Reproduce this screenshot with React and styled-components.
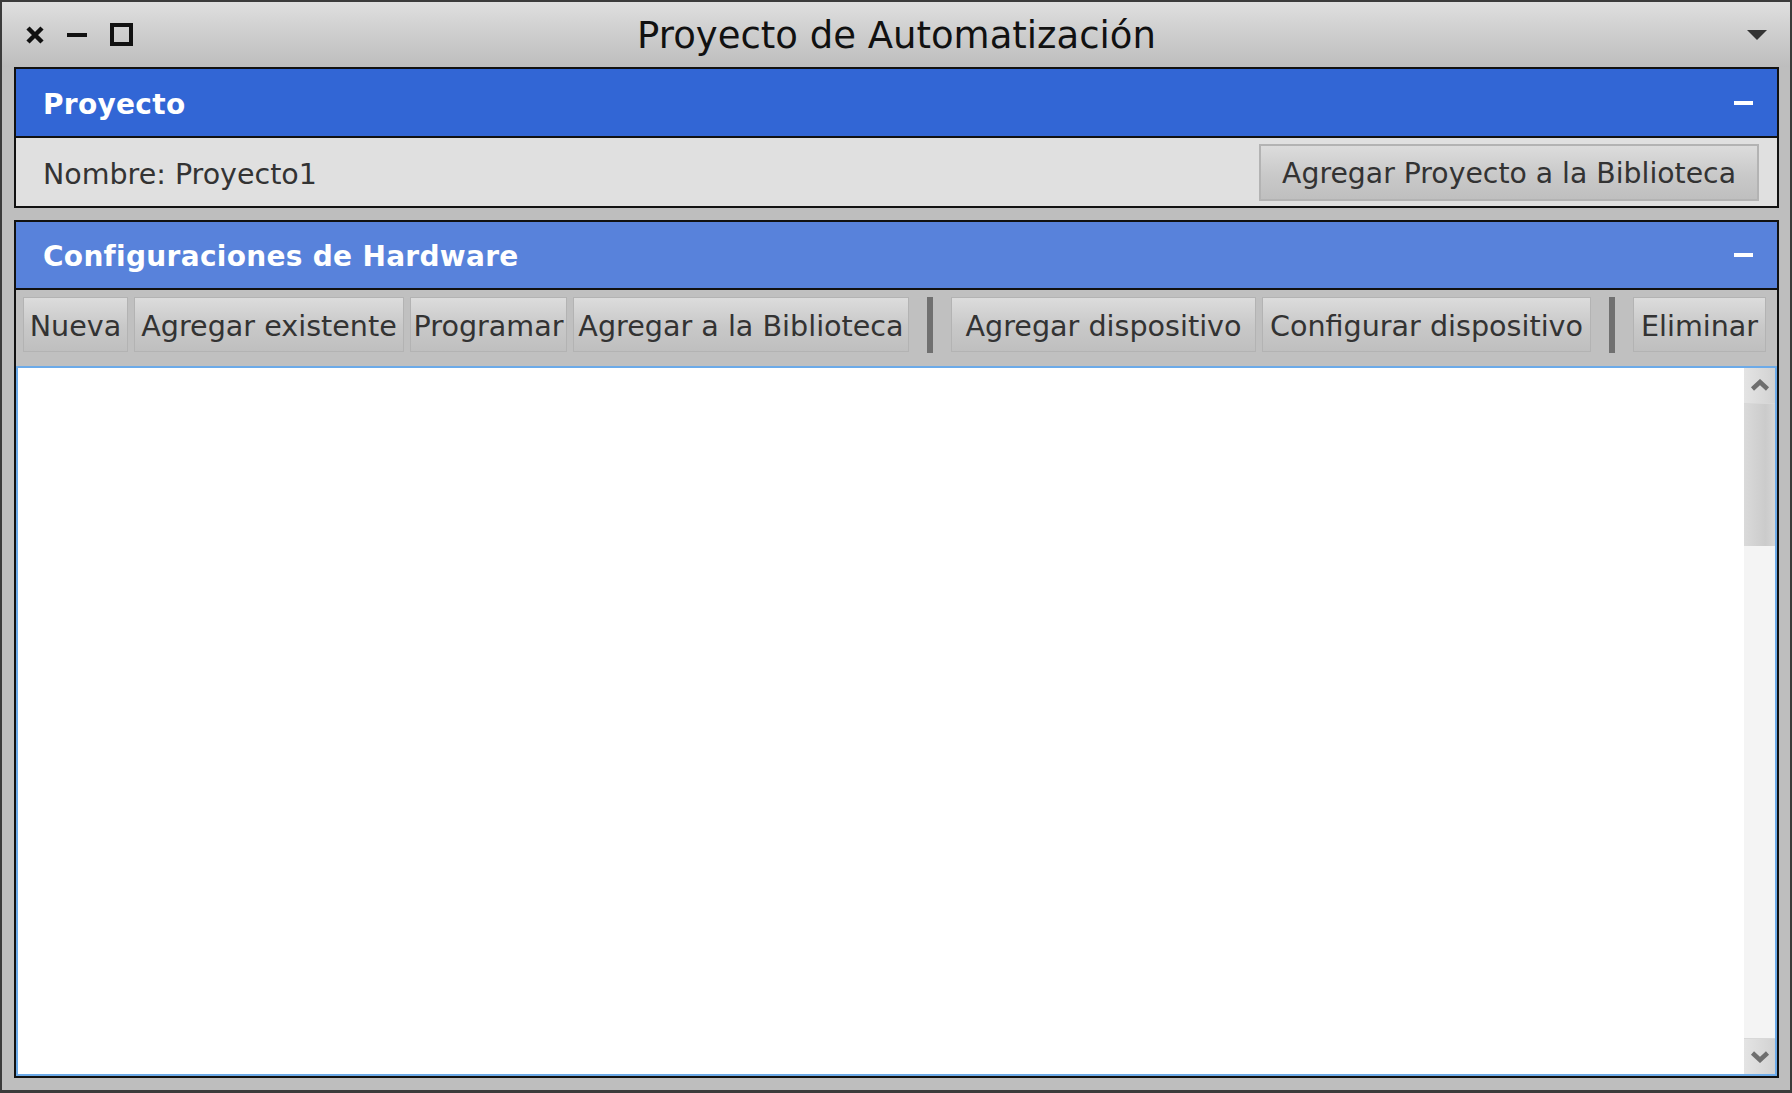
import React from "react"
import styled, { createGlobalStyle } from "styled-components"

const GlobalStyle = createGlobalStyle`
  html, body {
    margin: 0;
    padding: 0;
    background: #3b3b3b;
  }
  * {
    box-sizing: border-box;
  }
`

const Window = styled.div`
  width: 1792px;
  height: 1093px;
  border: 2px solid #3b3b3b;
  border-bottom-width: 3px;
  background: #bebebe;
  display: flex;
  flex-direction: column;
  font-family: "DejaVu Sans", "Liberation Sans", sans-serif;
  color: #333;
`

const TitleBar = styled.div`
  height: 65px;
  flex: none;
  display: grid;
  grid-template-columns: 1fr auto 1fr;
  align-items: center;
  padding: 0 23px 0 24px;
  background: linear-gradient(#dfdfdf, #cfcfcf 45%, #bdbdbd);
`

const Controls = styled.div`
  display: flex;
  align-items: center;
  gap: 23px;
`

const WindowTitle = styled.div`
  font-size: 37px;
  color: #111;
  padding-top: 2px;
  white-space: nowrap;
`

const MenuArrow = styled.div`
  justify-self: end;
  display: flex;
  align-items: center;
`

const Body = styled.div`
  flex: 1;
  display: flex;
  flex-direction: column;
  gap: 12px;
  padding: 0 11px 12px 12px;
  min-height: 0;
`

const Panel = styled.section`
  border: 2px solid #111;
  display: flex;
  flex-direction: column;
  flex: ${p => (p.$grow ? 1 : "none")};
  min-height: 0;
`

const PanelHeader = styled.div`
  height: ${p => p.$h}px;
  flex: none;
  display: flex;
  align-items: center;
  justify-content: space-between;
  padding: 3px 24px 0 27px;
  background: ${p => p.$bg};
  border-bottom: 2px solid #111;
  color: #fff;
  font-weight: bold;
  font-size: 28px;
  letter-spacing: 0.3px;
`

const Collapse = styled.span`
  width: 19px;
  height: 4px;
  background: #fff;
  margin-top: -3px;
`

const InfoRow = styled.div`
  height: 68px;
  display: flex;
  align-items: center;
  justify-content: space-between;
  padding: 0 18px 0 27px;
  background: #e0e0e0;
  font-size: 28.5px;
`

const Label = styled.span`
  padding-top: 4px;
`

const BigButton = styled.button`
  height: 57px;
  margin-top: 1px;
  padding: 2px 21px 0;
  border: 2px solid #b3b3b3;
  background: linear-gradient(#dcdcdc, #c9c9c9 55%, #bfbfbf);
  font-family: inherit;
  font-size: 28.3px;
  color: #333;
`

const Toolbar = styled.div`
  height: 76px;
  flex: none;
  display: flex;
  align-items: flex-start;
  gap: 6px;
  padding: 7px 7px 0 7px;
  background: #c0c0c0;
`

const ToolButton = styled.button`
  width: ${p => p.$w}px;
  height: 55px;
  padding: 2px 0 0;
  border: 1px solid #b3b3b3;
  background: linear-gradient(#dcdcdc, #c8c8c8 55%, #bfbfbf);
  font-family: inherit;
  font-size: 28.6px;
  color: #333;
  white-space: nowrap;
  text-align: center;
`

const Separator = styled.span`
  width: 6px;
  height: 56px;
  margin: 0 12px;
  background: #707070;
`

const ListBox = styled.div`
  flex: 1;
  min-height: 0;
  display: flex;
  border: 2px solid #6caae8;
  background: #fff;
`

const Canvas = styled.div`
  flex: 1;
`

const ScrollBar = styled.div`
  width: 31px;
  display: flex;
  flex-direction: column;
  background: #f4f4f4;
`

const ArrowButton = styled.div`
  height: 36px;
  flex: none;
  display: flex;
  align-items: center;
  justify-content: center;
  background: linear-gradient(to right, #e4e4e4, #d2d2d2);
  border-${p => (p.$down ? "top" : "bottom")}: 1px solid #d8d8d8;
`

const Thumb = styled.div`
  height: 142px;
  flex: none;
  background: linear-gradient(to right, #dadada, #cbcbcb 70%, #d6d6d6);
`

const Track = styled.div`
  flex: 1;
`

const Chevron = ({ down }) => (
  <svg width="20" height="13" viewBox="0 0 20 13">
    <polyline
      points={down ? "2.5,3 10,10 17.5,3" : "2.5,10 10,3 17.5,10"}
      fill="none"
      stroke="#6e6e6e"
      strokeWidth="4.5"
    />
  </svg>
)

const toolsA = [
  { label: "Nueva", w: 105 },
  { label: "Agregar existente", w: 270 },
  { label: "Programar", w: 157 },
  { label: "Agregar a la Biblioteca", w: 336 },
]
const toolsB = [
  { label: "Agregar dispositivo", w: 305 },
  { label: "Configurar dispositivo", w: 329 },
]

const App = () => {
  return (
    <>
      <GlobalStyle />
      <Window>
        <TitleBar>
          <Controls>
            <svg width="18" height="18" viewBox="0 0 18 18">
              <path d="M2 2 L16 16 M16 2 L2 16" stroke="#111" strokeWidth="4.5" />
            </svg>
            <svg width="20" height="4" viewBox="0 0 20 4">
              <rect width="20" height="4" fill="#111" />
            </svg>
            <svg width="23" height="23" viewBox="0 0 23 23">
              <rect x="2" y="2" width="19" height="19" fill="none" stroke="#111" strokeWidth="4" />
            </svg>
          </Controls>
          <WindowTitle>Proyecto de Automatización</WindowTitle>
          <MenuArrow>
            <svg width="20" height="10" viewBox="0 0 20 10">
              <polygon points="0,0 20,0 10,10" fill="#333" />
            </svg>
          </MenuArrow>
        </TitleBar>

        <Body>
          <Panel>
            <PanelHeader $h={69} $bg="#3266d5">
              Proyecto
              <Collapse />
            </PanelHeader>
            <InfoRow>
              <Label>Nombre: Proyecto1</Label>
              <BigButton>Agregar Proyecto a la Biblioteca</BigButton>
            </InfoRow>
          </Panel>

          <Panel $grow>
            <PanelHeader $h={68} $bg="#5882db">
              Configuraciones de Hardware
              <Collapse />
            </PanelHeader>
            <Toolbar>
              {toolsA.map(t => (
                <ToolButton key={t.label} $w={t.w}>{t.label}</ToolButton>
              ))}
              <Separator />
              {toolsB.map(t => (
                <ToolButton key={t.label} $w={t.w}>{t.label}</ToolButton>
              ))}
              <Separator />
              <ToolButton $w={133}>Eliminar</ToolButton>
            </Toolbar>
            <ListBox>
              <Canvas />
              <ScrollBar>
                <ArrowButton>
                  <Chevron />
                </ArrowButton>
                <Thumb />
                <Track />
                <ArrowButton $down>
                  <Chevron down />
                </ArrowButton>
              </ScrollBar>
            </ListBox>
          </Panel>
        </Body>
      </Window>
    </>
  )
}

export default App
